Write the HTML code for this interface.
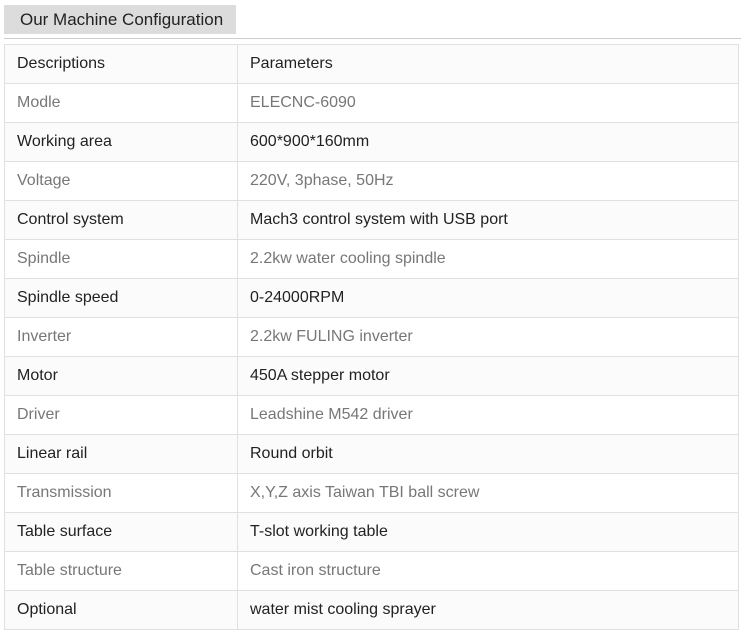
<!DOCTYPE html>
<html><head><style>
body{margin:0;background:#fff;font-family:"Liberation Sans",Arial,sans-serif;}
.h{position:absolute;left:4px;top:5px;width:232px;height:29px;background:#dcdcdc;font-size:17px;color:#222;line-height:29px;box-sizing:border-box;padding-left:16px;}
.ln{position:absolute;left:4px;top:38px;width:737px;height:1px;background:#ccc;}
table{position:absolute;left:4px;top:44px;width:735px;border-collapse:collapse;font-size:16px;}
td{border:1px solid #e0e0e0;height:39px;padding:0 0 0 12px;box-sizing:border-box;}
td:first-child{width:233px;}
tr.d td{background:#fbfbfb;color:#222;}
tr.g td{background:#fff;color:#777;}
</style></head><body>
<div class="h">Our Machine Configuration</div>
<div class="ln"></div>
<table>
<tr class="d"><td>Descriptions</td><td>Parameters</td></tr>
<tr class="g"><td>Modle</td><td>ELECNC-6090</td></tr>
<tr class="d"><td>Working area</td><td>600*900*160mm</td></tr>
<tr class="g"><td>Voltage</td><td>220V, 3phase, 50Hz</td></tr>
<tr class="d"><td>Control system</td><td>Mach3 control system with USB port</td></tr>
<tr class="g"><td>Spindle</td><td>2.2kw water cooling spindle</td></tr>
<tr class="d"><td>Spindle speed</td><td>0-24000RPM</td></tr>
<tr class="g"><td>Inverter</td><td>2.2kw FULING inverter</td></tr>
<tr class="d"><td>Motor</td><td>450A stepper motor</td></tr>
<tr class="g"><td>Driver</td><td>Leadshine M542 driver</td></tr>
<tr class="d"><td>Linear rail</td><td>Round orbit</td></tr>
<tr class="g"><td>Transmission</td><td>X,Y,Z axis Taiwan TBI ball screw</td></tr>
<tr class="d"><td>Table surface</td><td>T-slot working table</td></tr>
<tr class="g"><td>Table structure</td><td>Cast iron structure</td></tr>
<tr class="d"><td>Optional</td><td>water mist cooling sprayer</td></tr>
</table>
</body></html>
